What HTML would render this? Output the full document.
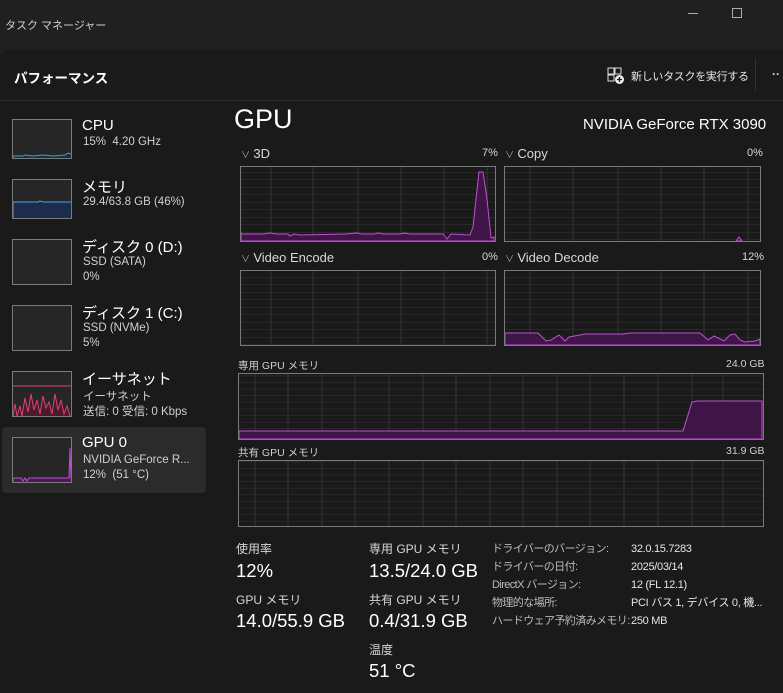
<!DOCTYPE html>
<html><head><meta charset="utf-8"><style>
*{margin:0;padding:0;box-sizing:border-box}
body{width:783px;height:693px;background:#202020;overflow:hidden;position:relative;font-family:"Liberation Sans","Noto Sans CJK JP",sans-serif;color:#fff}
.a{position:absolute;white-space:nowrap}
.main{position:absolute;left:0;top:50px;width:783px;height:643px;background:#1a1a1a;border-top-left-radius:8px}
.g{color:#d8d8d8;font-size:12px}
.s{color:#cfcfcf;font-size:10.5px}
.thumb{position:absolute;left:12px;width:60px;border:1px solid #7a7a7a;background:#262626;overflow:hidden}
.lbl{font-size:12px;color:#d8d8d8}
.big{font-size:18.5px;color:#fff}
.sm{font-size:11.5px;color:#d0d0d0}
</style></head><body>
<div class="a" style="left:5px;top:17px;font-size:11px;color:#cfcfcf">タスク マネージャー</div>
<div class="a" style="left:688px;top:13px;width:10px;border-top:1px solid #aaa"></div>
<div class="a" style="left:732px;top:8px;width:10px;height:10px;border:1px solid #aaa"></div>
<div class="main"></div>
<div class="a" style="left:14px;top:67px;font-size:13.5px;font-weight:bold;color:#fff">パフォーマンス</div>
<svg class="a" style="left:607px;top:67px" width="18" height="18" viewBox="0 0 18 18"><rect x="1" y="1" width="6" height="6" fill="none" stroke="#ddd"/><rect x="8" y="1" width="6" height="6" fill="none" stroke="#ddd"/><rect x="1" y="8" width="6" height="6" fill="none" stroke="#ddd"/><circle cx="12.5" cy="12.5" r="4.5" fill="#eee"/><path d="M12.5 10v5M10 12.5h5" stroke="#1a1a1a" stroke-width="1.3"/></svg>
<div class="a" style="left:631px;top:68px;font-size:11px;letter-spacing:-0.3px;color:#e8e8e8">新しいタスクを実行する</div>
<div class="a" style="left:755px;top:59px;height:32px;border-left:1px solid #333"></div>
<div class="a" style="left:772px;top:67px;font-size:12px;color:#ddd;font-weight:bold">··</div>
<div class="a" style="left:0;top:100px;width:783px;border-top:1px solid #2e2e2e"></div>

<div class="a" style="left:2px;top:427px;width:204px;height:66px;background:#2b2b2b;border-radius:4px"></div>
<div class="thumb" style="top:119px;height:40px"><svg width="60" height="40"><path d="M0 36 L10 36 12 35 20 36 30 35 40 36 52 35 55 33 58 34 60 34 V40 H0Z" fill="#17313d" stroke="#2aa6d8"/></svg></div>
<div class="a" style="left:82px;top:117px;font-size:15px">CPU</div>
<div class="a sm" style="left:83px;top:136px">15%&nbsp; 4.20 GHz</div>
<div class="thumb" style="top:179px;height:40px"><svg width="60" height="40"><path d="M0 22 L25 22 27 21 30 22 60 22 V40 H0Z" fill="#1b2d4a" stroke="#4ea3f0"/></svg></div>
<div class="a" style="left:82px;top:176px;font-size:15px">メモリ</div>
<div class="a sm" style="left:83px;top:196px">29.4/63.8 GB (46%)</div>
<div class="thumb" style="top:239px;height:46px"></div>
<div class="a" style="left:82px;top:236px;font-size:15px">ディスク 0 (D:)</div>
<div class="a sm" style="left:83px;top:256px">SSD (SATA)</div>
<div class="a sm" style="left:83px;top:271px">0%</div>
<div class="thumb" style="top:305px;height:46px"></div>
<div class="a" style="left:82px;top:302px;font-size:15px">ディスク 1 (C:)</div>
<div class="a sm" style="left:83px;top:322px">SSD (NVMe)</div>
<div class="a sm" style="left:83px;top:337px">5%</div>
<div class="thumb" style="top:371px;height:46px"><svg width="60" height="46"><line x1="0" y1="14" x2="60" y2="14" stroke="#e04070"/><path d="M0 44 L2 32 4 44 7 34 9 44 12 26 15 40 18 22 21 38 24 28 27 42 30 24 33 36 36 30 39 42 42 22 45 38 48 28 51 42 54 34 57 44 60 46 H0Z" fill="#4a1b2a" stroke="#e04070"/></svg></div>
<div class="a" style="left:82px;top:368px;font-size:15px">イーサネット</div>
<div class="a sm" style="left:83px;top:388px">イーサネット</div>
<div class="a sm" style="left:83px;top:403px">送信: 0 受信: 0 Kbps</div>
<div class="thumb" style="top:437px;height:46px"><svg width="60" height="46"><path d="M0 40 L8 40 10 43 12 40 14 43 16 40 56 40 57 10 58 40 59 42 60 42 V46 H0Z" fill="#4a1a55" stroke="#c050d8"/></svg></div>
<div class="a" style="left:82px;top:434px;font-size:15px">GPU 0</div>
<div class="a sm" style="left:83px;top:454px">NVIDIA GeForce R...</div>
<div class="a sm" style="left:83px;top:469px">12%&nbsp; (51 °C)</div>

<div class="a" style="left:234px;top:104px;font-size:27px;color:#fff">GPU</div>
<div class="a" style="left:583px;top:116px;font-size:15px;color:#fff">NVIDIA GeForce RTX 3090</div>

<div class="a g" style="left:241px;top:146px"><span style="font-size:9px;color:#aaa">∨</span> <span style="font-size:13px">3D</span></div>
<div class="a g" style="left:482px;top:147px;font-size:11px">7%</div>
<div class="a g" style="left:505px;top:146px"><span style="font-size:9px;color:#aaa">∨</span> <span style="font-size:13px">Copy</span></div>
<div class="a g" style="left:747px;top:147px;font-size:11px">0%</div>
<div class="a g" style="left:241px;top:250px"><span style="font-size:9px;color:#aaa">∨</span> <span style="font-size:13px">Video Encode</span></div>
<div class="a g" style="left:482px;top:251px;font-size:11px">0%</div>
<div class="a g" style="left:505px;top:250px"><span style="font-size:9px;color:#aaa">∨</span> <span style="font-size:13px">Video Decode</span></div>
<div class="a g" style="left:742px;top:251px;font-size:11px">12%</div>
<div class="a s" style="left:238px;top:358px">専用 GPU メモリ</div>
<div class="a s" style="left:726px;top:358px">24.0 GB</div>
<div class="a s" style="left:238px;top:445px">共有 GPU メモリ</div>
<div class="a s" style="left:726px;top:445px">31.9 GB</div>

<svg class="a" style="left:0;top:0" width="783" height="693">
<defs>
<pattern id="h75" width="10" height="7.5" patternUnits="userSpaceOnUse"><line x1="0" y1="7.5" x2="10" y2="7.5" stroke="#343434"/></pattern>
<pattern id="h66" width="10" height="6.6" patternUnits="userSpaceOnUse"><line x1="0" y1="6.6" x2="10" y2="6.6" stroke="#343434"/></pattern>
</defs>
<g stroke="#343434">
<rect x="240" y="166" width="255" height="75" fill="url(#h75)" stroke="none"/>
<rect x="504" y="166" width="256" height="75" fill="url(#h75)" stroke="none"/>
<rect x="240" y="270" width="255" height="75" fill="url(#h75)" stroke="none"/>
<rect x="504" y="270" width="256" height="75" fill="url(#h75)" stroke="none"/>
<rect x="238" y="373" width="525" height="66" fill="url(#h66)" stroke="none"/>
<rect x="238" y="460" width="525" height="66" fill="url(#h66)" stroke="none"/>
<path d="M271 166V241M313 166V241M358 166V241M401 166V241M444 166V241M487 166V241M271 270V345M313 270V345M358 270V345M401 270V345M444 270V345M487 270V345"/>
<path d="M530 166V241M573 166V241M618 166V241M661 166V241M704 166V241M748 166V241M530 270V345M573 270V345M618 270V345M661 270V345M704 270V345M748 270V345"/>
<path d="M255 373V439M288 373V439M322 373V439M355 373V439M389 373V439M423 373V439M456 373V439M490 373V439M523 373V439M557 373V439M590 373V439M624 373V439M658 373V439M692 373V439M723 373V439"/>
<path d="M255 460V526M288 460V526M322 460V526M355 460V526M389 460V526M423 460V526M456 460V526M490 460V526M523 460V526M557 460V526M590 460V526M624 460V526M658 460V526M692 460V526M723 460V526"/>
</g>
<path d="M241 233 L242 234 263 234 270 233 277 234 288 234 290 236 294 234 300 235 345 234 357 233 362 234 374 234 378 233 384 234 400 234 404 233 410 234 443 234 447 239 451 234 470 235 473 227 479 172 483 172 487 199 491 238 494 237 V241 H241Z" fill="#3f1547" stroke="#c24fd6"/>
<path d="M736 241 L739 237 742 241Z" fill="#3f1547" stroke="#c24fd6"/>
<path d="M505 333 L538 333 542 337 546 341 551 340 559 335 565 341 569 337 580 335 585 334 623 334 630 333 645 333 700 333 708 340 714 336 724 341 730 335 735 334 740 340 745 342 755 341 760 339 V345 H505Z" fill="#3f1547" stroke="#c24fd6"/>
<path d="M239 431 L683 431 692 402 697 401 762 401 V439 H239Z" fill="#3f1547" stroke="#c24fd6"/>
<g fill="none" stroke="#7a7a7a">
<rect x="240.5" y="166.5" width="255" height="75"/>
<rect x="504.5" y="166.5" width="256" height="75"/>
<rect x="240.5" y="270.5" width="255" height="75"/>
<rect x="504.5" y="270.5" width="256" height="75"/>
<rect x="238.5" y="373.5" width="525" height="66"/>
<rect x="238.5" y="460.5" width="525" height="66"/>
</g>
</svg>

<div class="a lbl" style="left:236px;top:540px">使用率</div>
<div class="a big" style="left:236px;top:560px">12%</div>
<div class="a lbl" style="left:236px;top:591px">GPU メモリ</div>
<div class="a big" style="left:236px;top:610px">14.0/55.9 GB</div>
<div class="a lbl" style="left:369px;top:540px">専用 GPU メモリ</div>
<div class="a big" style="left:369px;top:560px">13.5/24.0 GB</div>
<div class="a lbl" style="left:369px;top:591px">共有 GPU メモリ</div>
<div class="a big" style="left:369px;top:610px">0.4/31.9 GB</div>
<div class="a lbl" style="left:369px;top:641px">温度</div>
<div class="a big" style="left:369px;top:660px">51 °C</div>
<div class="a" style="left:492px;top:540px;font-size:11px;letter-spacing:-0.6px;color:#bbb;line-height:18px">ドライバーのバージョン:<br>ドライバーの日付:<br>DirectX バージョン:<br>物理的な場所:<br>ハードウェア予約済みメモリ:</div>
<div class="a" style="left:631px;top:540px;font-size:11px;letter-spacing:-0.3px;color:#e6e6e6;line-height:18px">32.0.15.7283<br>2025/03/14<br>12 (FL 12.1)<br>PCI バス 1, デバイス 0, 機...<br>250 MB</div>
</body></html>
